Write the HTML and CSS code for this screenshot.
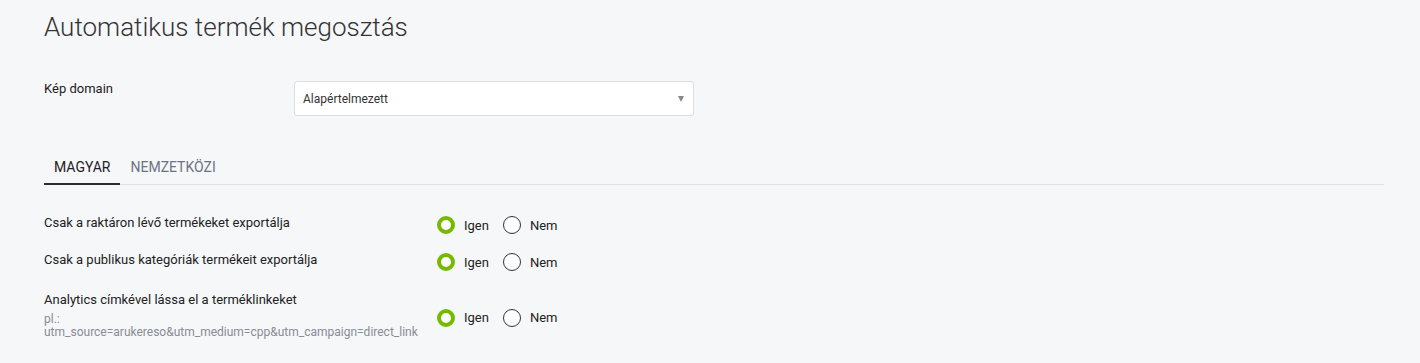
FILE: index.html
```html
<!DOCTYPE html>
<html lang="hu">
<head>
    <meta charset="UTF-8">
    <title>Automatikus termék megosztás</title>
    <link rel="stylesheet" href="styles.css">
</head>
<body>
    <div class="page">
        <h1 class="page-title">Automatikus termék megosztás</h1>

        <div class="form-row domain-row">
            <label class="form-label">Kép domain</label>
            <div class="select-box">
                <span>Alapértelmezett</span>
                <span class="select-arrow"></span>
            </div>
        </div>

        <div class="tabs">
            <div class="tab active">MAGYAR</div>
            <div class="tab">NEMZETKÖZI</div>
        </div>

        <div class="option-row">
            <div class="option-label">Csak a raktáron lévő termékeket exportálja</div>
            <div class="radios">
                <span class="radio checked"></span><span class="radio-text">Igen</span>
                <span class="radio"></span><span class="radio-text">Nem</span>
            </div>
        </div>
        <div class="option-row">
            <div class="option-label">Csak a publikus kategóriák termékeit exportálja</div>
            <div class="radios">
                <span class="radio checked"></span><span class="radio-text">Igen</span>
                <span class="radio"></span><span class="radio-text">Nem</span>
            </div>
        </div>
        <div class="option-row with-hint">
            <div class="option-label">
                Analytics címkével lássa el a terméklinkeket
                <div class="option-hint">pl.:<br>utm_source=arukereso&amp;utm_medium=cpp&amp;utm_campaign=direct_link</div>
            </div>
            <div class="radios">
                <span class="radio checked"></span><span class="radio-text">Igen</span>
                <span class="radio"></span><span class="radio-text">Nem</span>
            </div>
        </div>
    </div>
</body>
</html>
```

FILE: styles.css
```css
body {
    margin: 0;
    background-color: #f6f7f9;
    font-family: Roboto, "Liberation Sans", sans-serif;
    color: #222;
}
.page {
    padding: 0 36px 0 44px;
}
.page-title {
    margin: 0;
    padding-top: 11px;
    font-size: 26px;
    font-weight: 300;
    line-height: 32px;
    color: #333;
}
.form-row {
    display: flex;
    align-items: flex-start;
}
.domain-row {
    margin-top: 38px;
}
.form-label {
    width: 250px;
    font-size: 13px;
    line-height: 16px;
}
.select-box {
    box-sizing: border-box;
    width: 400px;
    height: 35px;
    background-color: #fff;
    border: 1px solid #dcdcdc;
    border-radius: 3px;
    display: flex;
    align-items: center;
    justify-content: space-between;
    padding: 0 9px 0 8px;
    font-size: 12px;
    color: #333;
}
.select-arrow {
    width: 0;
    height: 0;
    border-left: 3.5px solid transparent;
    border-right: 3.5px solid transparent;
    border-top: 6px solid #888;
}
.tabs {
    display: flex;
    margin-top: 33px;
    border-bottom: 1px solid #e2e3e5;
}
.tab {
    padding: 10px 10px 8px;
    font-size: 14px;
    line-height: 16px;
    color: #6b7480;
    margin-bottom: -1px;
    border-bottom: 2px solid transparent;
}
.tab.active {
    color: #222;
    border-bottom-color: #2b2f33;
}
.option-row {
    display: flex;
    align-items: center;
    margin-top: 27px;
}
.option-row + .option-row {
    margin-top: 15px;
}
.option-row.with-hint {
    margin-top: 21px;
}
.option-label {
    width: 393px;
    font-size: 13px;
    line-height: 16px;
}
.option-hint {
    margin-top: 5px;
    font-size: 12px;
    line-height: 13px;
    color: #878c96;
}
.radios {
    display: flex;
    align-items: center;
    padding-top: 4px;
}
.radio {
    box-sizing: border-box;
    width: 18px;
    height: 18px;
    border: 1px solid #333;
    border-radius: 50%;
    background-color: #fff;
}
.radio.checked {
    border: 4px solid #76b900;
}
.radio-text {
    font-size: 13px;
    margin-left: 9px;
    margin-right: 14px;
}
```
